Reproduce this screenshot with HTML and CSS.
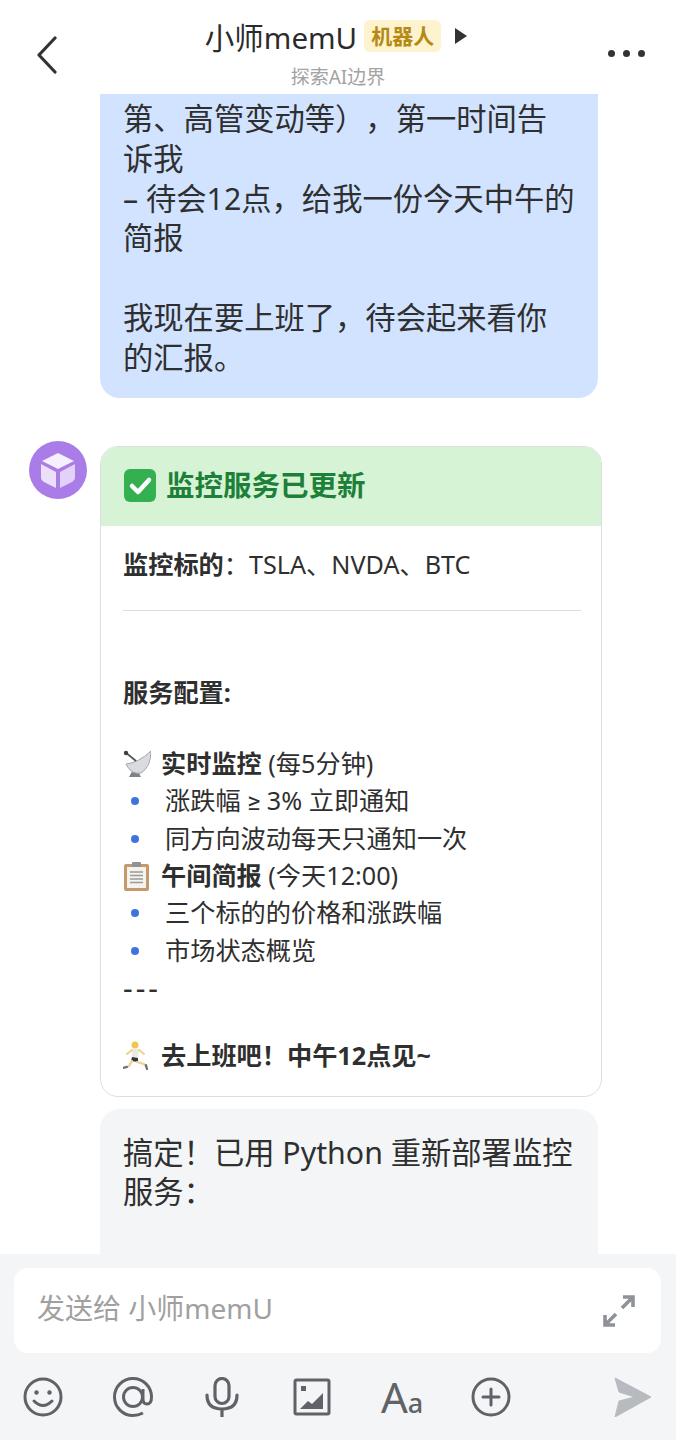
FILE: index.html
```html
<!DOCTYPE html>
<html lang="zh-CN">
<head>
    <meta charset="UTF-8">
    <meta name="viewport" content="width=device-width, initial-scale=1.0">
    <title>小师memU</title>
    <link rel="stylesheet" href="styles.css">
</head>
<body>
    <div class="app">
        <header class="topbar">
            <div class="back">
                <svg width="20" height="38" viewBox="0 0 20 38"><path d="M18 2 L2 19 L18 36" fill="none" stroke="#333" stroke-width="3.2" stroke-linecap="round" stroke-linejoin="round"/></svg>
            </div>
            <div class="who">
                <div class="who-row">
                    <span class="who-name">小师memU</span>
                    <span class="badge">机器人</span>
                    <span class="caret"></span>
                </div>
                <div class="who-sub">探索AI边界</div>
            </div>
            <div class="more"><i></i><i></i><i></i></div>
        </header>

        <main class="chat">
            <div class="bubble bubble-me">第、高管变动等），第一时间告<br>诉我<br>– 待会12点，给我一份今天中午的<br>简报<br><br>我现在要上班了，待会起来看你<br>的汇报。</div>

            <div class="msg">
                <div class="avatar">
                    <svg width="40" height="40" viewBox="0 0 40 40">
                        <path d="M20 3 L36 11 L20 19 L4 11 Z" fill="#f6effd"/>
                        <path d="M3 14 L18 22 L18 38 L6 32 Q3 30.500 3 28 Z" fill="#ecdffa"/>
                        <path d="M37 14 L22 22 L22 38 L34 32 Q37 30.500 37 28 Z" fill="#e2d2f7"/>
                    </svg>
                </div>
                <div class="msg-body">
                    <section class="card">
                        <div class="card-head">
                            <svg class="check" width="32" height="33" viewBox="0 0 32 33">
                                <rect width="32" height="33" rx="6" fill="#35b050"/>
                                <path d="M8 17 L14 23 L25 11" fill="none" stroke="#fff" stroke-width="4.500" stroke-linecap="round" stroke-linejoin="round"/>
                            </svg>
                            <h3 class="card-title">监控服务已更新</h3>
                        </div>
                        <div class="card-body">
                            <p><b>监控标的</b>：TSLA、NVDA、BTC</p>
                            <hr class="rule">
                            <p><b>服务配置:</b></p>
                            <p class="section first">
                                <svg class="emoji" width="28" height="28" viewBox="0 0 28 28">
                                    <path d="M12 16 L6 27 L18 27 Z" fill="#7f8387"/>
                                    <path d="M28 1 Q28 17 18 23 Q8 25 3 14 Q15 13 28 1 Z" fill="#d9dbde" stroke="#a4a7ab" stroke-width="1"/>
                                    <path d="M2 2 L13 11" stroke="#55585c" stroke-width="1.800"/>
                                    <circle cx="3" cy="3" r="2.200" fill="#3c3f43"/>
                                </svg>
                                <span><b>实时监控</b> (每5分钟)</span>
                            </p>
                            <ul class="dots">
                                <li><span>涨跌幅 <span class="sym">≥</span> 3% 立即通知</span></li>
                                <li>同方向波动每天只通知一次</li>
                            </ul>
                            <p class="section">
                                <svg class="emoji" width="28" height="30" viewBox="0 0 28 30">
                                    <rect x="1" y="3" width="25" height="27" rx="2" fill="#c49a6c"/>
                                    <rect x="4" y="6" width="19" height="21" fill="#f5f3ee"/>
                                    <path d="M7 11 H20 M7 14.500 H20 M7 18 H20 M7 21.500 H20" stroke="#9a9a9a" stroke-width="1.300"/>
                                    <rect x="9" y="1" width="9" height="5" rx="1" fill="#8f9296"/>
                                </svg>
                                <span><b>午间简报</b> (今天12:00)</span>
                            </p>
                            <ul class="dots">
                                <li>三个标的的价格和涨跌幅</li>
                                <li>市场状态概览</li>
                            </ul>
                            <p class="dashes">---</p>
                            <p class="section last">
                                <svg class="emoji" width="28" height="30" viewBox="0 0 28 30">
                                    <circle cx="12" cy="4" r="3.500" fill="#f0c850"/>
                                    <path d="M9 8 L16 8 L15 17 L9 16 Z" fill="#e9e9e6"/>
                                    <path d="M9 9 L4 13 M16 9 L21 13" stroke="#f2cf8e" stroke-width="2" stroke-linecap="round"/>
                                    <path d="M9 16 L15 17 L15 21 L8 20 Z" fill="#33363a"/>
                                    <path d="M9 20 L6 25 L2 26 M14 21 L21 23 L23 26" fill="none" stroke="#f2cf8e" stroke-width="2.200" stroke-linecap="round"/>
                                    <path d="M0 27 L4 26 M23 24 L24 28" stroke="#6b7078" stroke-width="2.200" stroke-linecap="round"/>
                                </svg>
                                <span><b>去上班吧！中午12点见~</b></span>
                            </p>
                        </div>
                    </section>
                    <div class="bubble bubble-bot">搞定！已用 Python 重新部署监控<br>服务：</div>
                </div>
            </div>
        </main>

        <footer class="composer">
            <div class="input">
                <span class="placeholder">发送给 小师memU</span>
                <svg width="34" height="34" viewBox="0 0 34 34" fill="none" stroke="#8f9296" stroke-width="3.600">
                    <path d="M21 3 H31 V13 M31 3 L20 14 M13 31 H3 V21 M3 31 L14 20"/>
                </svg>
            </div>
            <div class="tools">
                <svg class="tool" viewBox="0 0 40 40" fill="none" stroke="#5f6368" stroke-width="3">
                    <circle cx="20" cy="20" r="18"/>
                    <circle cx="13.500" cy="15.500" r="2.200" fill="#5f6368" stroke="none"/>
                    <circle cx="26.500" cy="15.500" r="2.200" fill="#5f6368" stroke="none"/>
                    <path d="M11 24 Q20 33 29 24" stroke-linecap="round"/>
                </svg>
                <svg class="tool" viewBox="0 0 40 40" fill="none" stroke="#5f6368" stroke-width="3">
                    <path d="M30 36 Q25 38.500 20 38.500 A18.500 18.500 0 1 1 38.500 20 Q38.500 27 34 27 Q30 27 30 22 V12"/>
                    <circle cx="20" cy="20" r="9.500"/>
                </svg>
                <svg class="tool" viewBox="0 0 40 40" fill="none" stroke="#5f6368" stroke-width="3.200">
                    <rect x="13" y="1.500" width="14" height="25" rx="7"/>
                    <path d="M5 18 Q5 32 20 32 Q35 32 35 18 M20 32 V40" stroke-linecap="round"/>
                </svg>
                <svg class="tool" viewBox="0 0 40 40">
                    <rect x="3" y="3" width="34" height="34" rx="1.500" fill="none" stroke="#5f6368" stroke-width="3"/>
                    <rect x="9" y="9" width="5" height="5" fill="#5f6368"/>
                    <path d="M8 32 L16 24 L20 27 L31 16 V32 Z" fill="#5f6368"/>
                </svg>
                <div class="tool tool-text">A<small>a</small></div>
                <svg class="tool" viewBox="0 0 40 40" fill="none" stroke="#5f6368" stroke-width="3">
                    <circle cx="20" cy="20" r="18"/>
                    <path d="M20 12 V28 M12 20 H28" stroke-linecap="round"/>
                </svg>
                <svg class="send" width="38" height="40" viewBox="0 0 38 40">
                    <path d="M1 1 L37 20 L1 40 L5 24 L21 20 L5 15 Z" fill="#b7bbbf" stroke="#b7bbbf" stroke-width="1" stroke-linejoin="round"/>
                </svg>
            </div>
        </footer>
    </div>
</body>
</html>
```

FILE: styles.css
```css
* {
    box-sizing: border-box;
}
body {
    margin: 0;
    background: #fff;
    color: #2f2f2f;
    font-family: "Noto Sans", "Noto Sans CJK SC", sans-serif;
    text-spacing-trim: space-all;
}
.app {
    display: flex;
    flex-direction: column;
    width: 676px;
    height: 1440px;
    overflow: hidden;
}

/* top bar */
.topbar {
    display: grid;
    grid-template-columns: 1fr auto 1fr;
    align-items: center;
    flex: none;
    height: 94px;
    background: #fff;
}
.back {
    padding: 16px 0 0 37px;
    line-height: 0;
}
.who {
    display: flex;
    flex-direction: column;
    align-items: center;
    padding-top: 14px;
}
.who-row {
    display: flex;
    align-items: center;
    height: 38px;
    margin-right: 4px;
}
.who-name {
    font-size: 29.500px;
    color: #2b2b2b;
}
.badge {
    margin-left: 7px;
    padding: 0 7px;
    height: 32px;
    line-height: 32px;
    border-radius: 6px;
    background: #fdf3cf;
    color: #b58a12;
    font-size: 21px;
    font-weight: 700;
}
.caret {
    margin-left: 14px;
    border-left: 12px solid #333;
    border-top: 8px solid transparent;
    border-bottom: 8px solid transparent;
}
.who-sub {
    margin-top: 8px;
    font-size: 19px;
    line-height: 28px;
    color: #a3a3a3;
}
.more {
    display: flex;
    justify-content: flex-end;
    gap: 8px;
    padding: 12px 31px 0 0;
}
.more i {
    width: 7px;
    height: 7px;
    border-radius: 50%;
    background: #333;
}

/* chat area */
.chat {
    flex: 1;
    min-height: 0;
    overflow: hidden;
}
.bubble {
    font-size: 30.300px;
    line-height: 39.800px;
    border-radius: 20px;
}
.bubble-me {
    width: 498px;
    margin-left: 100px;
    padding: 5px 20px 20px 23px;
    border-radius: 0 0 20px 20px;
    background: #d1e3ff;
}
.msg {
    display: flex;
    gap: 13px;
    margin-top: 43px;
    padding-left: 29px;
}
.avatar {
    display: flex;
    align-items: center;
    justify-content: center;
    flex: none;
    width: 58px;
    height: 58px;
    border-radius: 50%;
    background: #a97ce8;
}
.msg-body {
    margin-top: 5px;
}
.bubble-bot {
    width: 498px;
    height: 240px;
    margin-top: 12px;
    padding: 24px 20px 24px 23px;
    background: #f3f5f7;
}

/* card */
.card {
    width: 502px;
    border: 1px solid #dedede;
    border-radius: 18px;
    overflow: hidden;
    background: #fff;
}
.card-head {
    display: flex;
    align-items: center;
    gap: 10px;
    height: 79px;
    padding: 0 0 2px 23px;
    background: #d7f3d5;
}
.check {
    flex: none;
}
.card-title {
    margin: 0;
    font-size: 28.500px;
    line-height: 40px;
    font-weight: 700;
    color: #1d8039;
}
.card-body {
    padding: 20px 20px 21px 22px;
    font-size: 25.200px;
    line-height: 37.300px;
}
.card-body p {
    margin: 0;
}
.card-body b {
    font-weight: 700;
}
.rule {
    height: 1px;
    margin: 27px 0 63px;
    border: 0;
    background: #dedede;
}
.section {
    display: flex;
    align-items: center;
    gap: 10px;
}
.card-body .section.first {
    margin-top: 34px;
}
.card-body .section.last {
    margin-top: 31px;
}
.card-body .dashes {
    font-size: 30px;
    line-height: 37.300px;
    letter-spacing: 3px;
}
.emoji {
    flex: none;
}
.sym {
    font-family: Roboto, sans-serif;
    line-height: 1;
}
.dots {
    margin: 0;
    padding: 0;
    list-style: none;
}
.dots li {
    display: flex;
    align-items: center;
    height: 37.300px;
    padding-left: 42px;
    position: relative;
}
.dots li::before {
    content: "";
    position: absolute;
    left: 8px;
    top: 15px;
    width: 8px;
    height: 8px;
    border-radius: 50%;
    background: #3f74e0;
}

/* composer */
.composer {
    flex: none;
    height: 186px;
    padding: 14px 15px 0 14px;
    background: #f3f5f7;
}
.input {
    display: flex;
    align-items: center;
    justify-content: space-between;
    height: 85px;
    padding: 0 25px 0 23px;
    border-radius: 14px;
    background: #fff;
}
.placeholder {
    padding-bottom: 8px;
    font-size: 28px;
    color: #a0a0a0;
}
.tools {
    display: flex;
    align-items: center;
    margin: 24px 0 0 9px;
}
.tool {
    flex: none;
    width: 40px;
    height: 40px;
    margin-right: 49.500px;
}
.tool-text {
    font-size: 42px;
    line-height: 40px;
    color: #5f6368;
    white-space: nowrap;
}
.tool-text small {
    font-size: 27px;
    font-weight: 500;
}
.send {
    margin-left: 54px;
}
```
